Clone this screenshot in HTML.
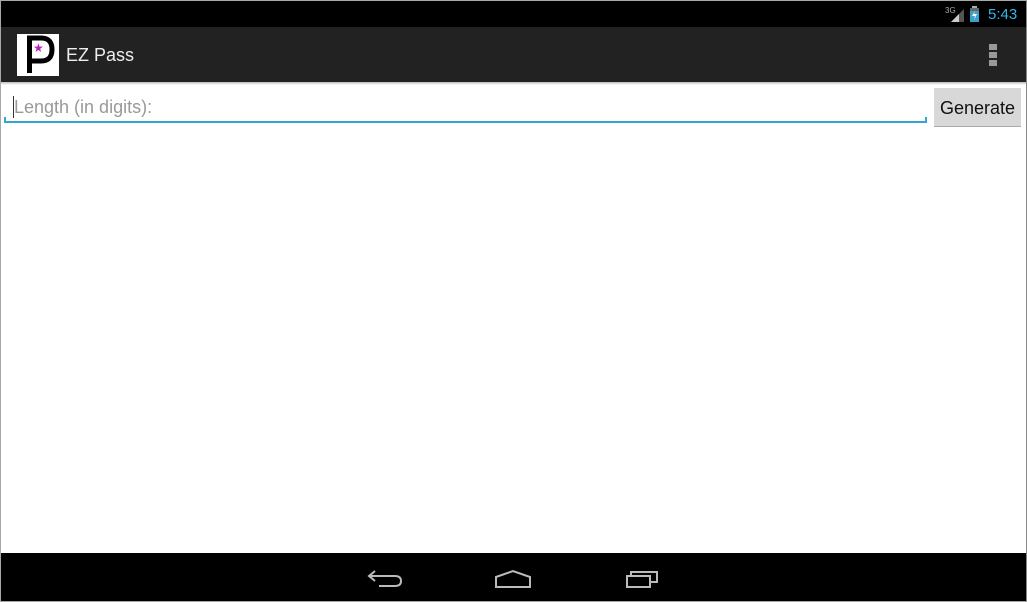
<!DOCTYPE html>
<html><head><meta charset="utf-8"><style>
*{margin:0;padding:0;box-sizing:border-box}
body{width:1027px;height:602px;overflow:hidden;background:#fff;font-family:"Liberation Sans",sans-serif;position:relative}
.frame{position:absolute;left:0;top:0;width:1027px;height:602px;border:1px solid #a8a8a8;border-right-color:#888;pointer-events:none;z-index:5}
.status{position:absolute;left:0;top:0;width:1027px;height:27px;background:#000}
.ab{position:absolute;left:0;top:27px;width:1027px;height:55px;background:#222}
.shadow{position:absolute;left:0;top:82px;width:1027px;height:3px;background:linear-gradient(#bbb,#fff)}
.nav{position:absolute;left:0;top:553px;width:1027px;height:49px;background:#000}
</style></head><body>
<div class="status">
<svg style="position:absolute;left:944px;top:5px" width="22" height="18"><text x="1" y="8" font-size="8" fill="#aaa" font-family="Liberation Sans">3G</text><polygon points="7,17 20,4 20,17" fill="#555"/><polygon points="7,17 15,9 15,17" fill="#ccc"/></svg>
<svg style="position:absolute;left:969px;top:6px" width="12" height="17"><rect x="3" y="0" width="5" height="2" fill="#aaa"/><rect x="1" y="2" width="9" height="14" fill="#3aa0cc"/><rect x="1" y="2" width="9" height="3" fill="#666"/><path d="M6 5 L3 10 L6 10 L5 14 L8 8 L5 8 Z" fill="#fff"/></svg>
<div style="position:absolute;left:988px;top:6px;color:#33b5e5;font-size:15px">5:43</div>
</div>
<div class="ab">
<svg style="position:absolute;left:17px;top:7px" width="42" height="42">
<rect width="42" height="42" fill="#fff"/>
<path d="M12.5 39 V4 H24 Q35 4 35 15.5 Q35 27 24 27 H12.5" fill="none" stroke="#000" stroke-width="5"/>
<text x="16" y="18" font-size="12" fill="#c020c0" font-family="DejaVu Sans">★</text>
</svg>
<div style="position:absolute;left:66px;top:18px;color:#eee;font-size:18px">EZ Pass</div>
<div style="position:absolute;left:989px;top:17px;width:8px;height:6px;background:#999"></div>
<div style="position:absolute;left:989px;top:25px;width:8px;height:6px;background:#999"></div>
<div style="position:absolute;left:989px;top:33px;width:8px;height:6px;background:#999"></div>
</div>
<div class="shadow"></div>
<div style="position:absolute;left:13px;top:96px;width:1px;height:22px;background:#333"></div>
<div style="position:absolute;left:14px;top:97px;color:#999;font-size:18px">Length (in digits):</div>
<div style="position:absolute;left:4px;top:121px;width:923px;height:2px;background:#33a6d4"></div>
<div style="position:absolute;left:4px;top:117px;width:2px;height:6px;background:#33a6d4"></div>
<div style="position:absolute;left:925px;top:117px;width:2px;height:6px;background:#33a6d4"></div>
<div style="position:absolute;left:934px;top:88px;width:87px;height:39px;background:#d8d8d8;border-bottom:1px solid #aaa;color:#111;font-size:18px;text-align:center;line-height:40px">Generate</div>
<div class="nav">
<svg style="position:absolute;left:365px;top:14px" width="300" height="24" fill="none" stroke="#bbb" stroke-width="2">
<path d="M10 4 L4 9 L10 14 M4 9 H30 Q36 9 36 14 Q36 19 30 19 H14"/>
<path d="M131 20 V10 L148 4 L165 10 V20 Z"/>
<path d="M262 9 V20 H285 V9 Z M266 9 V5 H292 V15 H285"/>
</svg>
</div>
<div class="frame"></div>
</body></html>
